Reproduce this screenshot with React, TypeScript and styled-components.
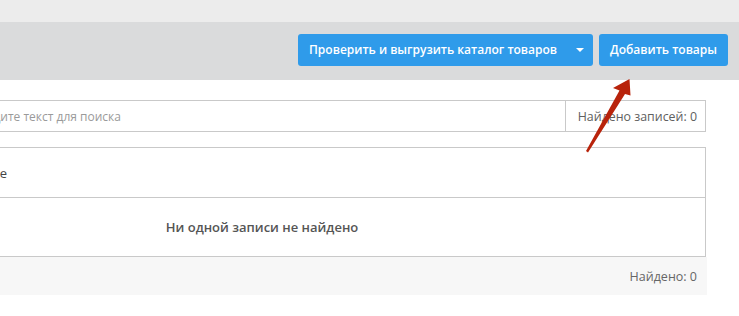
import React from "react";
import styled, { createGlobalStyle } from "styled-components";

const GlobalStyle = createGlobalStyle`
  html, body {
    margin: 0;
    padding: 0;
    background: #ffffff;
    overflow: hidden;
    font-family: "Open Sans", "Liberation Sans", sans-serif;
  }
  * { box-sizing: border-box; }
`;

const Page = styled.div`
  position: relative;
  width: 739px;
  height: 316px;
`;

const TopStrip = styled.div`
  height: 22px;
  background: #ececec;
`;

const HeaderBar = styled.div`
  height: 58px;
  background: #dadbdc;
  display: flex;
  align-items: center;
  justify-content: flex-end;
  gap: 6px;
  padding-right: 11px;
  padding-bottom: 3px;
`;

const Button = styled.button`
  height: 32px;
  border: none;
  border-radius: 3px;
  background: #2f9bea;
  color: #ffffff;
  font-family: "Open Sans", "Liberation Sans", sans-serif;
  font-size: 12px;
  font-weight: 600;
  padding: 0 11px;
  display: flex;
  align-items: center;
  gap: 14px;
  cursor: pointer;
`;

const Caret = styled.span`
  width: 0;
  height: 0;
  border-left: 4px solid transparent;
  border-right: 4px solid transparent;
  border-top: 4px solid #ffffff;
  margin-left: 5px;
  margin-right: -2px;
`;

const Content = styled.div`
  margin-left: -182px;
  padding: 20px 33px 0 0;
`;

const SearchRow = styled.div`
  display: flex;
  height: 32px;
  border: 1px solid #c9c9c9;
`;

const SearchInput = styled.input`
  flex: 1;
  border: none;
  outline: none;
  padding: 0 0 0 153px;
  font-family: "Open Sans", "Liberation Sans", sans-serif;
  font-size: 12px;
  color: #555;
  background: transparent;
  &::placeholder {
    color: #9a9a9a;
  }
`;

const SearchAddon = styled.div`
  display: flex;
  align-items: center;
  border-left: 1px solid #c9c9c9;
  padding: 0 8px 0 12px;
  font-size: 12.4px;
  color: #606060;
`;

const Table = styled.div`
  margin-top: 15px;
  border: 1px solid #c9c9c9;
`;

const HeaderRow = styled.div`
  display: flex;
  align-items: center;
  height: 50px;
  border-bottom: 1px solid #c9c9c9;
`;

const HeaderCell = styled.div<{ $width: number }>`
  width: ${(p) => p.$width}px;
  text-align: right;
  font-size: 13px;
  color: #444;
`;

const EmptyRow = styled.div`
  height: 58px;
  display: flex;
  align-items: center;
  justify-content: center;
  font-size: 13px;
  font-weight: 600;
  color: #555;
  padding-bottom: 1px;
`;

const Footer = styled.div`
  height: 38px;
  background: #f7f7f7;
  display: flex;
  align-items: center;
  justify-content: flex-end;
  padding-right: 10px;
  font-size: 12.5px;
  color: #666;
  margin-right: -1px;
`;

const ArrowSvg = styled.svg`
  position: absolute;
  left: 580px;
  top: 75px;
`;

export default function App() {
  return (
    <Page>
      <GlobalStyle />
      <TopStrip />
      <HeaderBar>
        <Button>
          Проверить и выгрузить каталог товаров
          <Caret />
        </Button>
        <Button>Добавить товары</Button>
      </HeaderBar>
      <Content>
        <SearchRow>
          <SearchInput placeholder="Введите текст для поиска" />
          <SearchAddon>Найдено записей: 0</SearchAddon>
        </SearchRow>
        <Table>
          <HeaderRow>
            <HeaderCell $width={188}>Наименование</HeaderCell>
          </HeaderRow>
          <EmptyRow>Ни одной записи не найдено</EmptyRow>
        </Table>
        <Footer>Найдено: 0</Footer>
      </Content>
      <ArrowSvg width="60" height="85" viewBox="0 0 60 85">
        <path
          d="M49.5 4 L33 13 L39.5 15.5 L6 76 L8 77.5 L45 19 L50.5 20.5 Z"
          fill="#b8230b"
        />
      </ArrowSvg>
    </Page>
  );
}
